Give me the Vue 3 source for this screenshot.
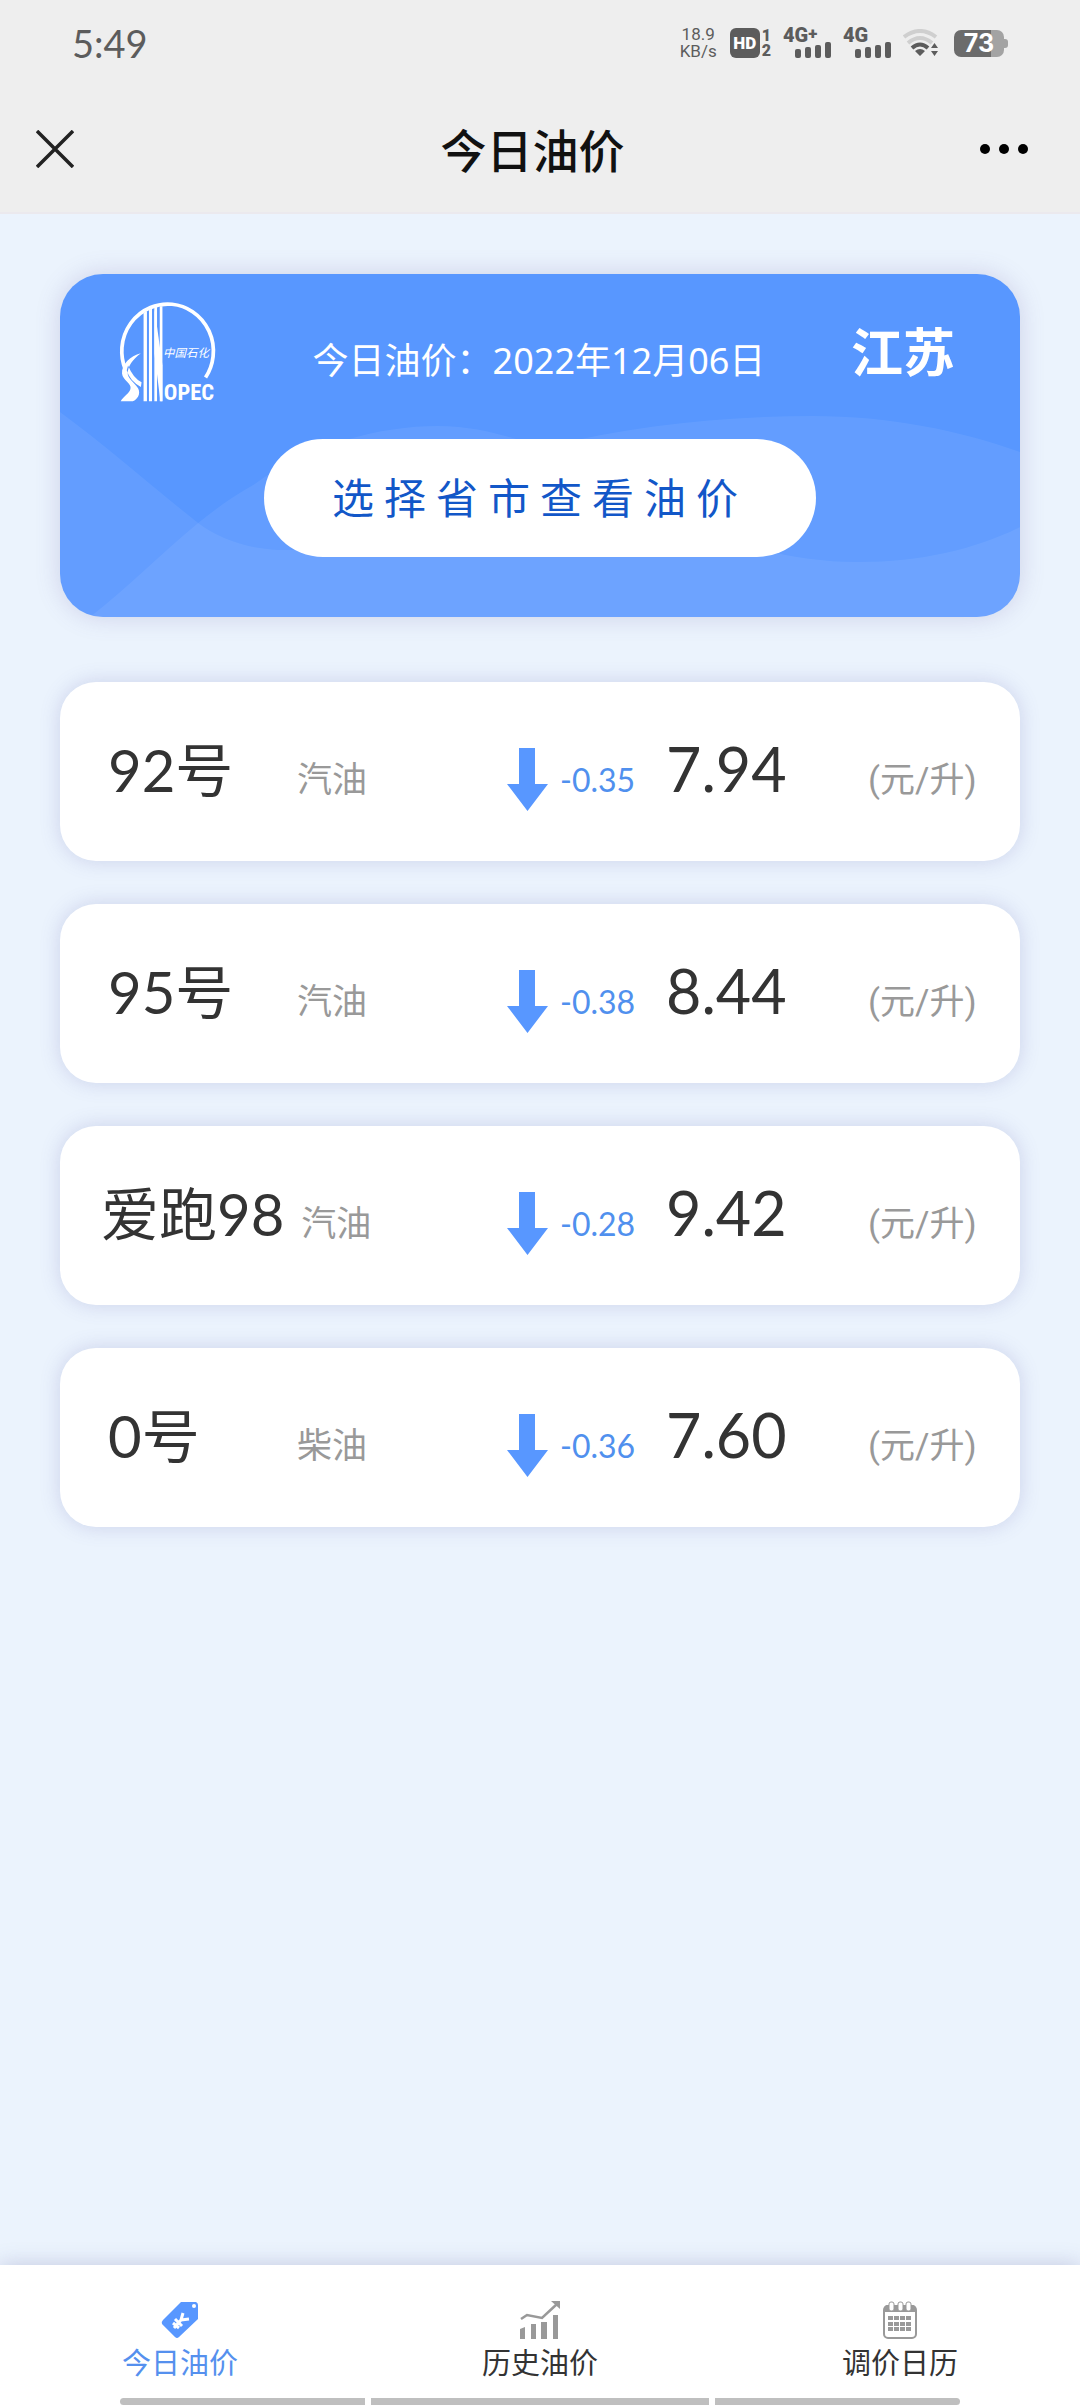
<script setup>
const prices = [
  { name: '92号', fuel: '汽油', delta: '-0.35', price: '7.94' },
  { name: '95号', fuel: '汽油', delta: '-0.38', price: '8.44' },
  { name: '爱跑98', fuel: '汽油', delta: '-0.28', price: '9.42', wide: true },
  { name: '0号', fuel: '柴油', delta: '-0.36', price: '7.60' },
]
const calendarRows = [17, 23, 28]
const calendarCols = [5, 11, 17, 23]
</script>

<template>
  <div class="page">
    <header class="top">
      <div class="status">
        <time class="clock">5:49</time>
        <div class="indicators">
          <div class="speed"><span>18.9</span><span>KB/s</span></div>
          <div class="hd">
            <span class="hd-box">HD</span>
            <span class="sims"><span>1</span><span>2</span></span>
          </div>
          <div class="signal">
            <span>4G<sup>+</sup></span>
            <svg width="36" height="16" viewBox="0 0 36 16" aria-hidden="true">
              <rect x="0" y="7" width="6" height="9" rx="2" /><rect x="10" y="5" width="6" height="11" rx="2" />
              <rect x="20" y="3" width="6" height="13" rx="2" /><rect x="30" y="0" width="6" height="16" rx="2" />
            </svg>
          </div>
          <div class="signal">
            <span>4G</span>
            <svg width="36" height="16" viewBox="0 0 36 16" aria-hidden="true">
              <rect x="0" y="7" width="6" height="9" rx="2" /><rect x="10" y="5" width="6" height="11" rx="2" />
              <rect x="20" y="3" width="6" height="13" rx="2" /><rect x="30" y="0" width="6" height="16" rx="2" />
            </svg>
          </div>
          <svg class="wifi" width="36" height="28" viewBox="0 0 36 28" aria-hidden="true">
            <g fill="none" stroke-width="4">
              <path d="M1 8 Q17 -4 33 8" stroke="#cfcfcf" />
              <path d="M5 14 Q17 4 29 14" stroke="#cfcfcf" />
              <path d="M9 19 Q17 12 25 19" stroke="#5c5c5c" />
            </g>
            <path d="M12 22 Q17 18 22 22 L17 27Z M28 19 L31.500 14 L35 19Z M28 22 L31.500 27 L35 22Z" fill="#5c5c5c" />
          </svg>
          <div class="battery"><span>73</span></div>
        </div>
      </div>
      <div class="bar">
        <button class="icon-btn" type="button" aria-label="关闭">
          <svg width="38" height="38" viewBox="0 0 38 38"><path d="M1 1 L37 37 M37 1 L1 37" stroke="#222" stroke-width="3.500" fill="none" /></svg>
        </button>
        <h1>今日油价</h1>
        <button class="icon-btn" type="button" aria-label="更多">
          <svg width="50" height="12" viewBox="0 0 50 12"><circle cx="6" cy="6" r="5" /><circle cx="25" cy="6" r="5" /><circle cx="44" cy="6" r="5" /></svg>
        </button>
      </div>
    </header>

    <main>
      <section class="hero">
        <svg class="waves" viewBox="0 0 959 343" preserveAspectRatio="none" aria-hidden="true">
          <path d="M0 138 C50 175 95 215 138 249 C160 265 185 274 218 276 C400 278 500 230 600 250 C680 270 730 288 797 288 C860 288 915 275 959 253 V343 H0Z" />
          <path d="M30 343 C70 312 100 280 138 249 C155 235 175 221 193 211 C250 170 320 152 377 152 C430 152 460 170 490 172 C570 152 660 142 752 142 C830 142 900 157 959 178 V343Z" />
        </svg>
        <div class="hero-head">
          <svg class="logo" viewBox="60 36 288 300" role="img" aria-label="SINOPEC 中国石化">
            <path d="M76 238 A136 140 0 1 1 314 262" fill="none" stroke="#fff" stroke-width="11" />
            <path d="M130 70 L140 64 V332 H130Z M146 61 L155 56 V332 H146Z M162 53 L170 51 V332 H162Z M178 50 H186 V332 H178Z" fill="#fff" />
            <path d="M162 54 L186 225 V332 H180 L162 190Z" fill="#fff" />
            <path d="M122 190 C90 198 64 224 66 250 C68 270 96 280 91 296 C87 310 70 318 62 332 H98 C112 326 122 310 114 294 C106 280 86 268 83 252 C82 230 98 207 122 190Z M84 226 Q98 262 124 276 L122 290 Q88 270 80 240Z" fill="#fff" />
            <text class="logo-cn" x="188" y="201">中国石化</text>
            <text class="logo-en" x="190" y="330">OPEC</text>
          </svg>
          <p class="date">今日油价：2022年12月06日</p>
          <strong class="province">江苏</strong>
        </div>
        <button class="pick" type="button">选择省市查看油价</button>
      </section>

      <ul class="list">
        <li v-for="item in prices" :key="item.name" class="card">
          <div class="product">
            <span class="name" :class="{ wide: item.wide }">{{ item.name }}</span>
            <span class="fuel">{{ item.fuel }}</span>
          </div>
          <svg class="arrow" width="41" height="63" viewBox="0 0 41 63" aria-hidden="true"><path d="M12 0 H28 V36 H41 L20.500 63 L0 36 H12Z" fill="#5897ff" /></svg>
          <span class="delta">{{ item.delta }}</span>
          <span class="price">{{ item.price }}</span>
          <span class="unit">(元/升)</span>
        </li>
      </ul>
    </main>

    <footer>
      <nav>
        <a href="#today" class="active" aria-current="page">
          <svg width="38" height="38" viewBox="0 0 38 38" aria-hidden="true">
            <path d="M20 1 L35 1 Q37 2 37 4 V18 L18 36 Q16 38 14 36 L1 23 Q0 21 2 19Z" fill="#5897ff" />
            <circle cx="33" cy="5" r="2" fill="#fff" />
            <path d="M13 27 L20 19 L22 12 M20 19 L28 18 M14 18 L21 25 M12 22 L18 27" stroke="#fff" stroke-width="3" fill="none" />
          </svg>
          <span>今日油价</span>
        </a>
        <a href="#history">
          <svg width="42" height="38" viewBox="0 0 42 38" aria-hidden="true">
            <path d="M1 28 L6 26 V38 H1Z M12 23 H17 V38 H12Z M22 21 H28 V38 H22Z M34 14 H39 V38 H34Z" fill="#999" />
            <path d="M2 18 L8 14 L23 17 L38 3" stroke="#999" stroke-width="2.500" fill="none" />
            <path d="M32 0 H41 V8Z" fill="#999" />
          </svg>
          <span>历史油价</span>
        </a>
        <a href="#calendar">
          <svg width="34" height="38" viewBox="0 0 34 38" aria-hidden="true">
            <rect x="1" y="5" width="32" height="32" rx="4" fill="#fff" stroke="#999" stroke-width="2" />
            <path d="M1 11 V8 Q1 4 5 4 H29 Q33 4 33 8 V11Z" fill="#999" />
            <g fill="#fff" stroke="#999" stroke-width="1"><rect x="6" y="1" width="5" height="9" rx="2" /><rect x="15" y="1" width="5" height="9" rx="2" /><rect x="23" y="1" width="5" height="9" rx="2" /></g>
            <template v-for="y in calendarRows" :key="y">
              <rect v-for="x in calendarCols" :key="x" :x="x" :y="y - 2" width="5" height="4" fill="#999" />
            </template>
          </svg>
          <span>调价日历</span>
        </a>
      </nav>
      <div class="gesture" aria-hidden="true"><i></i><i></i><i></i></div>
    </footer>
  </div>
</template>

<style>
body {
  margin: 0;
  background: #ebf3fd;
}
</style>

<style scoped>
.page {
  min-height: 100vh;
  display: flex;
  flex-direction: column;
  background: #ebf3fd;
  color: #333;
  font-family: Roboto, "Noto Sans CJK SC", sans-serif;
}
button {
  border: 0;
  padding: 0;
  background: none;
  font: inherit;
  cursor: pointer;
}
.top {
  background: #eee;
  border-bottom: 2px solid #ebe9ee;
}
.status {
  height: 86px;
  padding: 0 72px;
  display: flex;
  align-items: center;
  justify-content: space-between;
  color: #5c5c5c;
}
.clock {
  font: 38px/40px Lato, sans-serif;
}
.indicators {
  display: flex;
  align-items: center;
  height: 30px;
}
.speed {
  display: flex;
  flex-direction: column;
  align-items: center;
  font-size: 17px;
  line-height: 17px;
  margin-right: 13px;
}
.hd {
  display: flex;
  gap: 2px;
  margin-right: 12px;
}
.hd-box {
  width: 30px;
  height: 30px;
  border-radius: 6px;
  background: #5c5c5c;
  color: #fff;
  font-size: 17px;
  font-weight: 900;
  line-height: 30px;
  text-align: center;
}
.sims {
  display: flex;
  flex-direction: column;
  font-size: 16px;
  font-weight: 900;
  line-height: 15px;
}
.signal {
  width: 48px;
  height: 30px;
  margin-right: 12px;
  display: flex;
  flex-direction: column;
  align-items: flex-end;
  justify-content: space-between;
}
.signal span {
  display: flex;
  align-self: flex-start;
  height: 14px;
  font-size: 20px;
  font-weight: 900;
  line-height: 14px;
}
.signal sup {
  font-size: 17px;
  line-height: 10px;
}
.signal svg {
  fill: #5c5c5c;
}
.wifi {
  margin-right: 15px;
}
.battery {
  position: relative;
  width: 50px;
  height: 27px;
  margin-right: 4px;
  border-radius: 7px;
  background: linear-gradient(90deg, #6b6b6b 75%, #a3a3a3 75%);
  color: #fff;
  font: 700 25px/27px Inter, sans-serif;
  text-align: center;
}
.battery::after {
  content: "";
  position: absolute;
  right: -4px;
  top: 9px;
  width: 4px;
  height: 9px;
  border-radius: 0 3px 3px 0;
  background: #a3a3a3;
}
.bar {
  height: 126px;
  padding: 0 51px 0 36px;
  display: grid;
  grid-template-columns: 60px 1fr 60px;
  align-items: center;
}
.icon-btn {
  height: 60px;
  display: flex;
  align-items: center;
  color: #111;
}
.icon-btn:last-child {
  justify-content: flex-end;
}
h1 {
  margin: 0;
  padding: 6px 0 0;
  font-size: 46px;
  line-height: 60px;
  font-weight: 500;
  text-align: center;
  color: #111;
}
main {
  flex: 1;
  padding: 60px;
}
.hero {
  position: relative;
  padding: 26px 60px 60px;
  border-radius: 43px;
  background: #5897ff;
  box-shadow: 0 0 24px rgba(100, 90, 160, 0.22);
  display: flex;
  flex-direction: column;
  align-items: center;
  gap: 35px;
}
.waves {
  position: absolute;
  inset: 0;
  width: 100%;
  height: 100%;
  border-radius: 43px;
  fill: rgba(255, 255, 255, 0.065);
}
.hero-head {
  position: relative;
  width: 100%;
  display: flex;
  align-items: center;
  justify-content: space-between;
  color: #fff;
}
.logo {
  width: 97px;
  height: 104px;
  overflow: visible;
}
.logo-cn {
  fill: #fff;
  font: italic 34px "Noto Sans CJK SC", sans-serif;
}
.logo-en {
  fill: #fff;
  font: 700 67px "Liberation Sans Narrow", "Roboto Condensed", sans-serif;
}
.date {
  margin: 0 0 0 10px;
  padding-top: 18px;
  font-family: "Noto Sans", "Noto Sans CJK SC", sans-serif;
  font-size: 36px;
  line-height: 48px;
}
.province {
  margin-right: 5px;
  padding-top: 6px;
  font-size: 52px;
  line-height: 60px;
  font-weight: 700;
}
.pick {
  position: relative;
  width: 552px;
  max-width: 100%;
  height: 118px;
  padding-bottom: 6px;
  border-radius: 59px;
  background: #fff;
  color: #1257c8;
  font-size: 42px;
  letter-spacing: 10px;
}
.list {
  list-style: none;
  margin: 65px 0 0;
  padding: 0;
  display: flex;
  flex-direction: column;
  gap: 43px;
}
.card {
  display: grid;
  grid-template-columns: 1fr 53px 106px 202px 109px;
  align-items: baseline;
  padding: 57px 43px 50px 48px;
  border-radius: 36px;
  background: #fff;
  box-shadow: 0 0 20px rgba(90, 90, 170, 0.22);
}
.product {
  display: flex;
  align-items: baseline;
  gap: 17px;
}
.name {
  min-width: 172px;
}
.name.wide {
  margin-left: -7px;
}
.name,
.price {
  font-family: Lato, "Noto Sans CJK SC", sans-serif;
  font-size: 58px;
  line-height: 60px;
}
.price {
  font-size: 61px;
}
.fuel,
.unit {
  font-size: 35px;
  line-height: 48px;
  color: #999;
  white-space: nowrap;
}
.arrow {
  align-self: start;
  margin-top: 9px;
}
.delta {
  font-family: Lato, sans-serif;
  font-size: 32px;
  line-height: 40px;
  color: #5090ee;
}
footer {
  background: #fff;
  padding: 36px 0 3px;
  box-shadow: 0 0 20px rgba(90, 90, 150, 0.28);
}
nav {
  display: grid;
  grid-template-columns: repeat(3, 1fr);
}
nav a {
  display: flex;
  flex-direction: column;
  align-items: center;
  gap: 5px;
  color: #333;
  font-size: 29px;
  line-height: 40px;
  text-decoration: none;
}
nav a.active {
  color: #5590ee;
}
.gesture {
  margin: 14px 120px 0;
  display: grid;
  grid-template-columns: 245fr 338fr 245fr;
  gap: 6px;
}
.gesture i {
  height: 7px;
  background: #bfbfbf;
}
.gesture i:first-child {
  border-radius: 4px 0 0 4px;
}
.gesture i:last-child {
  border-radius: 0 4px 4px 0;
}
</style>
